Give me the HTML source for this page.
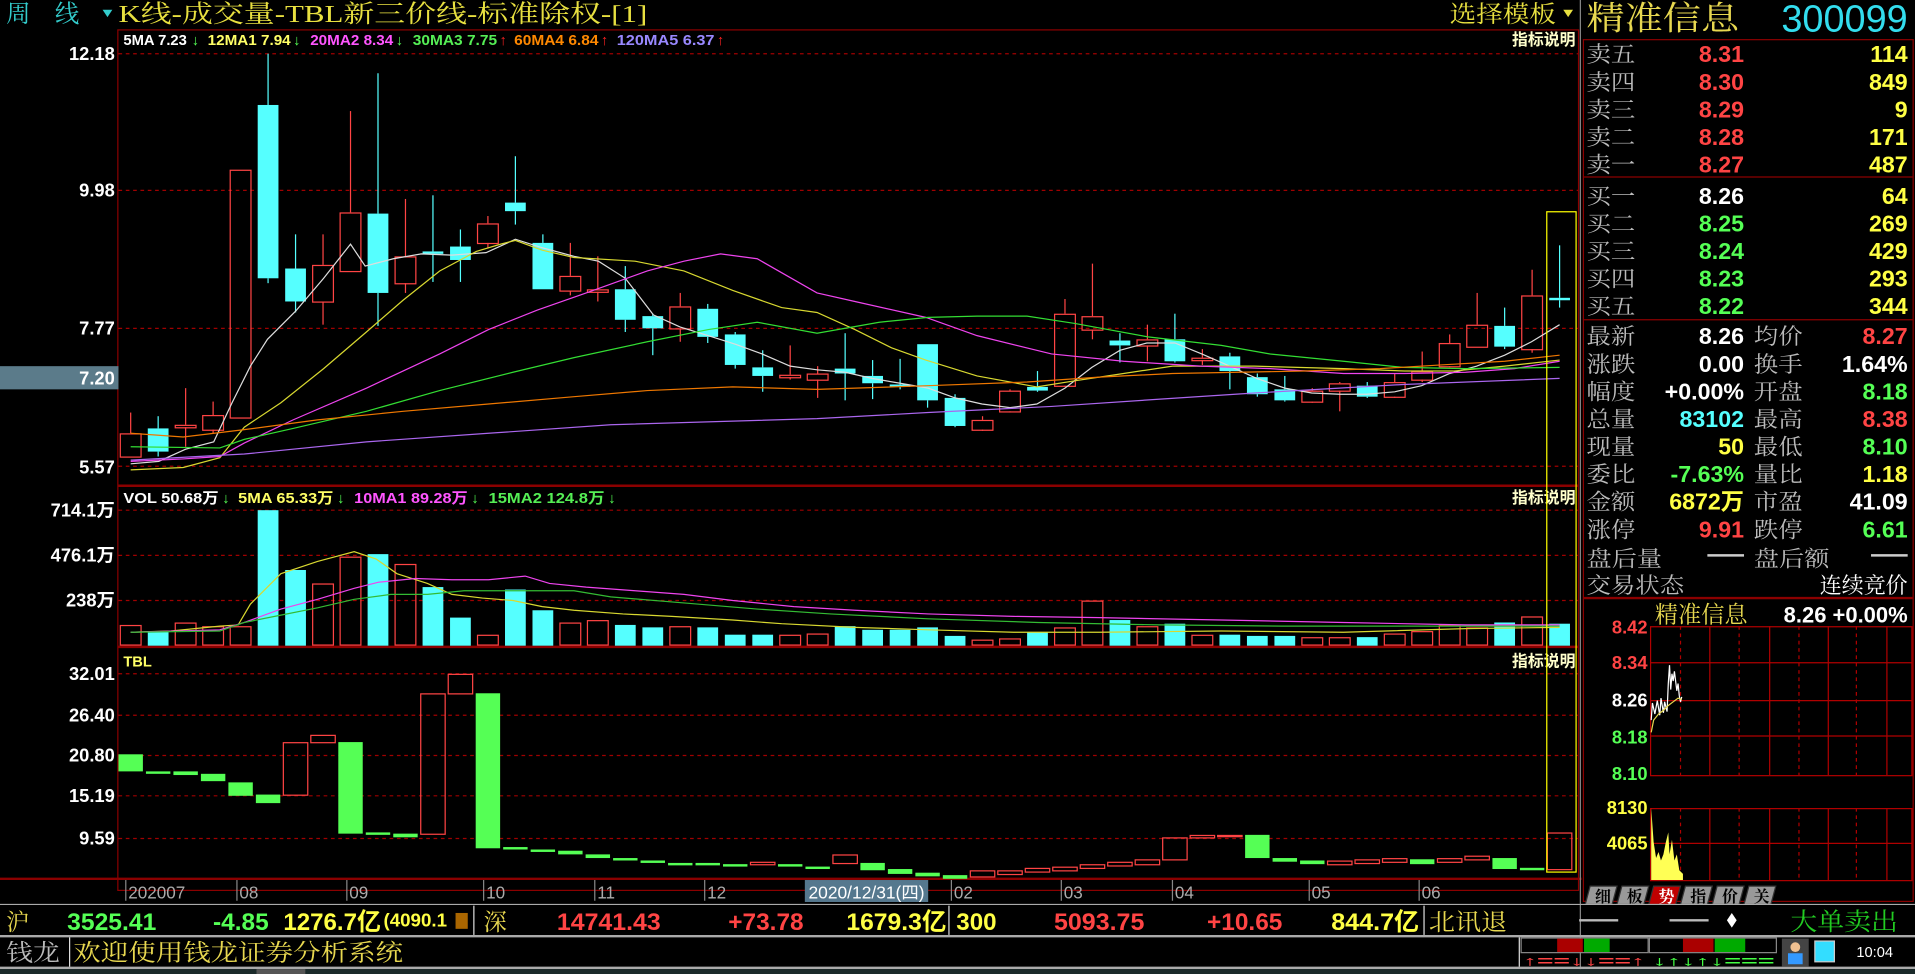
<!DOCTYPE html>
<html><head><meta charset="utf-8">
<style>
html,body{margin:0;padding:0;background:#000;width:1915px;height:974px;overflow:hidden}
#w{position:absolute;left:0;top:0;width:1568px;height:798px;transform:scale(1.22130,1.22055);transform-origin:0 0;background:#000}
svg{position:absolute;left:0;top:0}
text{font-family:"Liberation Sans","Noto Sans CJK SC",sans-serif}
.n{font-family:"Liberation Sans Narrow","Liberation Sans","Noto Sans CJK SC",sans-serif}
.s{font-family:"Liberation Serif","Noto Serif CJK SC",serif}
</style></head><body><div id="w">
<svg id="g" width="1568" height="798" viewBox="0 0 1568 798"></svg>
</div>
<script>
var g=document.getElementById('g'),h='';
function L(x1,y1,x2,y2,c,w,d){h+='<line x1="'+x1+'" y1="'+y1+'" x2="'+x2+'" y2="'+y2+'" stroke="'+c+'" stroke-width="'+(w||1)+'"'+(d?' stroke-dasharray="'+d+'"':'')+'/>';}
function R(x,y,w,hh,f,s){h+='<rect x="'+x+'" y="'+y+'" width="'+w+'" height="'+hh+'" fill="'+(f||'none')+'"'+(s?' stroke="'+s+'" stroke-width="1"':'')+'/>';}
function T(x,y,t,c,sz,o){o=o||{};h+='<text x="'+x+'" y="'+y+'" fill="'+c+'" font-size="'+sz+'"'+(o.a?' text-anchor="'+o.a+'"':'')+(o.b?' font-weight="bold"':'')+(o.k?' class="'+o.k+'"':'')+(o.l?' textLength="'+o.l+'" lengthAdjust="spacingAndGlyphs"':'')+'>'+t+'</text>';}
function P(pts,c,w){h+='<polyline points="'+pts+'" fill="none" stroke="'+c+'" stroke-width="'+(w||1)+'"/>';}
var RED='#ff4444',CY='#55ffff',GR='#55ff55',DR='#8b0000';
T(5,18,'周　线','#33cccc',20,{k:'s'});
h+='<polygon points="84,8 92,8 88,14" fill="#33cccc"/>';
T(97,18,'K线-成交量-TBL新三价线-标准除权-[1]','#e8e040',20,{k:'s',l:433});
T(1187,18,'选择模板','#e8e040',19,{k:'s',l:87});
h+='<polygon points="1280,8 1288,8 1284,14" fill="#e8e040"/>';
R(96.5,24.5,1196,705,null,DR);
L(97,398,1292,398,DR,2);L(97,530,1292,530,DR,2);
L(0,720,1295,720,DR,2);
[44,156,269,382].forEach(function(y){L(97,y,1292,y,'#a00000',1,'3,3');});
[418,455,492].forEach(function(y){L(97,y,1292,y,'#a00000',1,'3,3');});
[552,586,619,652,687].forEach(function(y){L(97,y,1292,y,'#a00000',1,'3,3');});
var ax=[[49,'12.18'],[161,'9.98'],[274,'7.77'],[388,'5.57'],[423,'714.1万'],[460,'476.1万'],[497,'238万'],[557,'32.01'],[591,'26.40'],[624,'20.80'],[657,'15.19'],[692,'9.59']];
ax.forEach(function(a){T(94,a[0],a[1],'#ffffff',15,{a:'end',b:1,k:'n'});});
R(0,300,97,19,'#5b7b8a');T(94,315,'7.20','#ffffff',15,{a:'end',b:1,k:'n'});
T(101,37,'5MA 7.23','#ffffff',12,{b:1,k:'n',l:52});T(157,37,'↓','#55ff55',12,{b:1});
T(170,37,'12MA1 7.94','#ffff66',12,{b:1,k:'n',l:68});T(240,37,'↓','#55ff55',12,{b:1});
T(254,37,'20MA2 8.34','#ff55ff',12,{b:1,k:'n',l:68});T(324,37,'↓','#55ff55',12,{b:1});
T(338,37,'30MA3 7.75','#55ee55',12,{b:1,k:'n',l:69});T(409,37,'↑','#ff2222',12,{b:1});
T(421,37,'60MA4 6.84','#ff8800',12,{b:1,k:'n',l:69});T(492,37,'↑','#ff2222',12,{b:1});
T(505,37,'120MA5 6.37','#9988ff',12,{b:1,k:'n',l:80});T(587,37,'↑','#ff2222',12,{b:1});
T(1290,37,'指标说明','#ffffcc',13,{a:'end',b:1});
T(101,412,'VOL 50.68万','#ffffff',12,{b:1,k:'n',l:78});T(182,412,'↓','#55ff55',12,{b:1});
T(195,412,'5MA 65.33万','#ffff66',12,{b:1,k:'n',l:78});T(276,412,'↓','#55ff55',12,{b:1});
T(290,412,'10MA1 89.28万','#ff55ff',12,{b:1,k:'n',l:93});T(386,412,'↓','#55ff55',12,{b:1});
T(400,412,'15MA2 124.8万','#55ee55',12,{b:1,k:'n',l:95});T(498,412,'↓','#55ff55',12,{b:1});
T(1290,412,'指标说明','#ffffcc',13,{a:'end',b:1});
T(101,546,'TBL','#ffff66',12,{b:1,k:'n'});
T(1290,546,'指标说明','#ffffcc',13,{a:'end',b:1});
var C=[['r',355,374,338,374],['c',351,370,341,374],['r',348,350,318,366],['r',340,352,329,355],['r',139,342,139,342],['c',86,228,44,232],['c',220,247,192,256],['r',217,247,192,266],['r',174,222,91,222],['c',175,240,60,267],['r',210,232,163,240],['c',206,208,160,231],['c',202,213,188,231],['r',183,199,177,203],['c',166,173,128,184],['c',199,237,192,237],['r',226,238,199,242],['r',237,239,210,247],['c',237,262,218,272],['c',259,269,257,291],['r',251,269,240,280],['c',253,276,249,281],['c',274,299,272,302],['c',301,308,287,321],['r',307,309,283,311],['r',306,311,300,326],['c',302,306,273,328],['c',308,314,295,327],['c',315,317,294,319],['c',282,328,282,334],['c',326,349,323,350],['r',344,352,341,353],['r',320,337,319,338],['c',317,320,304,321],['r',257,316,245,317],['r',259,270,216,278],['c',279,283,273,297],['r',278,283,266,296],['c',278,296,257,297],['r',293,295,286,299],['c',292,304,289,319],['c',309,323,306,325],['c',319,328,308,329],['r',320,329,318,330],['r',314,320,313,337],['c',316,325,313,326],['r',313,325,306,326],['r',304,311,288,313],['r',281,300,274,301],['r',266,284,240,284],['c',267,284,252,286],['r',242,286,221,289],['c',244,246,201,252]];
C.forEach(function(k,i){var x=107+22.5*i;var col=k[0]=='r'?RED:CY;
 if(k[3]<k[1])L(x,k[3],x,k[1],col);if(k[4]>k[2])L(x,k[2],x,k[4],col);
 if(k[0]=='r')R(x-8.5,k[1]+.5,17,Math.max(1,k[2]-k[1]),null,RED);else R(x-8.5,k[1],17,Math.max(2,k[2]-k[1]),CY);});
P('107,380 130,378 152,368 175,362 190,330 205,300 219,278 242,255 265,228 287,200 299,218 322,212 345,208 370,209 398,207 422,196 444,203 470,210 490,214 512,228 535,258 557,268 580,275 602,282 624,290 647,300 669,303 692,305 714,310 737,314 760,318 782,326 804,331 827,334 849,331 872,318 894,301 917,287 939,281 962,281 984,290 1007,300 1029,310 1052,318 1074,322 1097,323 1119,323 1142,321 1164,316 1187,306 1209,300 1232,291 1254,280 1277,266','#dddddd');
P('107,385 150,383 180,375 200,350 230,330 265,302 300,272 330,246 360,222 390,206 410,200 422,197 444,205 470,211 520,214 560,222 600,238 640,252 669,256 700,270 730,285 758,295 800,308 849,317 880,312 920,306 960,300 1027,300 1100,302 1150,304 1190,304 1232,300 1277,295','#d8d830');
P('107,378 150,376 180,374 200,363 240,344 300,318 360,290 400,270 440,254 480,240 530,222 560,214 590,208 620,212 669,240 700,247 758,260 800,275 861,290 920,296 983,300 1040,302 1100,306 1150,306 1200,305 1240,302 1277,296','#ee44ee');
P('107,366 180,367 200,360 240,351 300,337 360,320 420,305 470,293 530,280 580,270 620,264 669,273 720,264 760,260 800,259 841,259 880,265 940,276 1000,283 1040,290 1100,296 1149,301 1200,302 1277,301','#33dd33');
P('107,355 150,358 200,352 260,344 330,337 400,331 470,325 530,320 600,317 669,319 760,316 841,313 900,309 960,306 1068,304 1130,302 1180,299 1232,296 1277,291','#ee7700');
P('107,377 200,372 300,362 400,355 500,348 600,345 669,343 760,338 861,333 950,327 1027,322 1149,315 1277,310','#aa66ee');
var V=[512,517,510,513,513,418,467,478,456,454,462,481,506,520,483,500,510,508,512,514,513,514,520,520,520,519,513,516,516,514,521,524,523,518,514,492,508,513,511,520,520,521,521,522,522,522,519,517,512,514,510,505,511];
V.forEach(function(t,i){var x=107+22.5*i;if(C[i][0]=='r')R(x-8.5,t+.5,17,528-t,null,RED);else R(x-8.5,t,17,529-t,CY);});
P('107,518 140,517 180,513 195,512 205,495 230,470 260,460 290,452 308,458 325,470 350,478 370,487 395,490 420,492 444,497 470,500 510,503 550,505 600,508 640,511 700,514 760,516 830,518 900,518 1000,517 1100,518 1200,515 1277,514','#d8d830');
P('107,518 180,516 200,510 230,499 260,491 290,482 310,477 340,474 370,475 400,475 430,472 450,478 480,481 520,484 560,487 600,492 650,497 700,500 760,503 830,505 900,506 1000,508 1100,510 1200,512 1277,512','#ee44ee');
P('107,518 180,517 200,510 230,504 260,498 290,491 320,487 350,487 380,484 430,484 470,484 500,489 560,494 620,499 680,503 760,507 850,510 950,512 1050,513 1150,513 1277,513','#33bb33');
var B=[['g',618,632],['g',632,634],['g',632,635],['g',634,640],['g',641,652],['g',651,658],['r',608,651],['r',602,608],['g',608,683],['g',682,684],['g',683,686],['r',568,683],['r',552,568],['g',568,695],['g',694,696],['g',696,698],['g',697,700],['g',700,703],['g',703,705],['g',705,707],['g',707,708],['g',707,709],['g',708,710],['r',706,708],['g',708,710],['g',710,712],['r',700,707],['g',707,713],['g',712,716],['g',715,718],['g',717,720],['r',713,718],['r',713,716],['r',711,714],['r',710,713],['r',708,711],['r',706,709],['r',704,708],['r',686,704],['r',684,686],['r',684,685],['g',684,703],['g',703,706],['g',705,708],['r',705,708],['r',704,707],['r',703,706],['g',704,708],['r',703,706],['r',701,704],['g',703,712],['g',711,712],['r',682,712]];
B.forEach(function(k,i){var x=107+22.5*i;if(k[0]=='r')R(x-10,k[1]+.5,20,k[2]-k[1],null,RED);else R(x-10,k[1],20,Math.max(2,k[2]-k[1]),GR);});
R(1266.5,173.5,24,541,null,'#ffff00');
var D=[[105,'202007'],[196,'08'],[286,'09'],[398,'10'],[489,'11'],[579,'12'],[781,'02'],[871,'03'],[962,'04'],[1074,'05'],[1164,'06']];
D.forEach(function(d){L(d[0]-2,721,d[0]-2,738,'#888');T(d[0],736,d[1],'#aaaaaa',14,{k:'n'});});
R(659,721,101,18,'#55788e');T(662,736,'2020/12/31(四)','#ffffff',14,{k:'n',l:95});
L(1294,0,1294,798,'#888',1);
R(1296.5,32.5,270,706,null,DR);
L(1297,145,1566,145,DR,1);L(1297,262,1566,262,DR,1);L(1297,490,1566,490,DR,2);
T(1299,24,'精准信息','#e8d850',27,{k:'s',l:125});
T(1562,26,'300099','#33ddee',31,{a:'end'});
var ob=[['卖五','8.31','114',RED],['卖四','8.30','849',RED],['卖三','8.29','9',RED],['卖二','8.28','171',RED],['卖一','8.27','487',RED],['买一','8.26','64','#fff'],['买二','8.25','269',GR],['买三','8.24','429',GR],['买四','8.23','293',GR],['买五','8.22','344',GR]];
ob.forEach(function(o,i){var y=51+i*22.6+(i>4?3:0);T(1299,y,o[0],'#bbbbbb',18,{k:'s',l:40});T(1428,y,o[1],o[3],19,{a:'end',b:1});T(1562,y,o[2],'#ffff44',19,{a:'end',b:1});});
var st=[['最新','8.26','#fff','均价','8.27',RED],['涨跌','0.00','#fff','换手','1.64%','#fff'],['幅度','+0.00%','#fff','开盘','8.18',GR],['总量','83102',CY,'最高','8.38',RED],['现量','50','#ffff44','最低','8.10',GR],['委比','-7.63%',GR,'量比','1.18','#ffff44'],['金额','6872万','#ffff44','市盈','41.09','#fff'],['涨停','9.91',RED,'跌停','6.61',GR]];
st.forEach(function(o,i){var y=282+i*22.6;T(1299,y,o[0],'#bbbbbb',18,{k:'s',l:40});T(1428,y,o[1],o[2],19,{a:'end',b:1});T(1436,y,o[3],'#bbbbbb',18,{k:'s',l:40});T(1562,y,o[4],o[5],19,{a:'end',b:1});});
T(1299,464,'盘后量','#bbbbbb',18,{k:'s',l:62});L(1398,455,1428,455,'#ccc',2);T(1436,464,'盘后额','#bbbbbb',18,{k:'s',l:62});L(1532,455,1562,455,'#ccc',2);
T(1299,486,'交易状态','#bbbbbb',18,{k:'s',l:80});T(1562,486,'连续竞价','#ffffff',18,{a:'end',k:'s'});
T(1355,510,'精准信息','#e8d850',19,{k:'s'});T(1562,510,'8.26 +0.00%','#ffffff',18,{a:'end',b:1});
R(1351.5,513.5,214,122,null,'#b00000');
[543,574,603].forEach(function(y){L(1351,y,1566,y,'#b00000',1);});
[1400,1449,1497,1545].forEach(function(x){L(x,513,x,635,'#b00000',1);L(x,662,x,721,'#b00000',1);});
[1376,1424,1473,1520].forEach(function(x){L(x,513,x,635,'#b00000',1,'3,3');L(x,662,x,721,'#b00000',1,'3,3');});
R(1351.5,662.5,214,59,null,'#b00000');L(1351,691,1566,691,'#b00000',1);
[[519,'8.42',RED],[548,'8.34',RED],[579,'8.26','#fff'],[609,'8.18',GR],[639,'8.10',GR],[667,'8130','#ffff44'],[696,'4065','#ffff44']].forEach(function(a){T(1349,a[0],a[1],a[2],15,{a:'end',b:1});});
P('1352,590 1353,576 1355,585 1357,574 1359,586 1360,572 1362,584 1363,575 1365,583 1366,560 1367,545 1368,565 1369,552 1370,558 1371,550 1373,566 1374,560 1375,570 1376,575 1377,571','#ffffff');
P('1352,600 1354,590 1358,585 1362,582 1366,578 1370,575 1374,572 1377,573','#e8d850');
h+='<polygon points="1352,721 1352,662 1354,690 1356,703 1358,698 1360,705 1362,700 1364,690 1366,682 1367,700 1369,688 1371,705 1373,700 1375,713 1378,716 1378,721" fill="#ffff55"/>';
var tb=['细','板','势','指','价','关'];tb.forEach(function(t,i){var x=1298+i*26;h+='<polygon points="'+(x)+',741 '+(x+4)+',726 '+(x+26)+',726 '+(x+22)+',741" fill="'+(i==2?'#c00000':'#999')+'" stroke="#333"/>';T(x+8,739,t,i==2?'#fff':'#000',13,{b:1,k:'s'});});
L(0,741,1568,741,'#aaa',1);L(0,767,1568,767,'#aaa',2);
[388,777,1166].forEach(function(x){L(x,742,x,766,'#ddd');});
function S(x,t,c,a,l){T(x,762,t,c,20,{b:1,k:'n',a:a,l:l});}
T(5,762,'沪','#e8d850',19,{k:'s'});S(55,'3525.41',GR,null,73);S(220,'-4.85',GR,'end');S(232,'1276.7亿','#ffff44',null,80);T(314,759,'(4090.1','#ffff44',15,{b:1,k:'n',l:52});R(373,748,10,13,'#aa6600');
T(396,762,'深','#e8d850',19,{k:'s'});S(456,'14741.43',RED,null,85);S(658,'+73.78',RED,'end');S(693,'1679.3亿','#ffff44',null,82);S(783,'300','#ffff44',null,33);S(863,'5093.75',RED,null,74);S(1050,'+10.65',RED,'end');S(1090,'844.7亿','#ffff44',null,72);
T(1170,762,'北讯退','#e8d850',19,{k:'s',l:64});L(1293,754,1325,754,'#bbb',2);L(1367,754,1399,754,'#bbb',2);h+='<polygon points="1418,748 1422,754 1418,760 1414,754" fill="#fff"/>';
T(1466,762,'大单卖出','#22cc22',20,{k:'s',l:88});
L(0,793,1568,793,'#aaa',2);L(57,768,57,792,'#ddd');
T(5,787,'钱龙','#bbbbbb',19,{k:'s',l:44});T(60,787,'欢迎使用钱龙证券分析系统','#e8d850',19,{k:'s',l:270});
L(1244,768,1244,792,'#ddd');R(1245.5,768.5,104,12,null,'#888');R(1350.5,768.5,104,12,null,'#888');
R(1275,769,21,11,'#aa0000');R(1297,769,21,11,'#00aa00');R(1378,769,25,11,'#aa0000');R(1404,769,25,11,'#00aa00');
T(1247,791,'↑==↓↓==↑','#ff4444',11,{b:1,l:100});T(1353,791,'↓↑↓↑↓===','#44ff44',11,{b:1,l:100});
R(1459,769,22,23,'#444');h+='<circle cx="1470" cy="776" r="4" fill="#f0c090"/><rect x="1464" y="781" width="12" height="9" fill="#3399ff"/>';
R(1486,771,16,17,'#33ddff','#ccc');T(1520,784,'10:04','#ffffff',12,{k:'n'});
R(0,794,1568,4,'#1a2a2a');R(210,794,40,4,'#555');
g.innerHTML=h;
</script>
</body></html>
